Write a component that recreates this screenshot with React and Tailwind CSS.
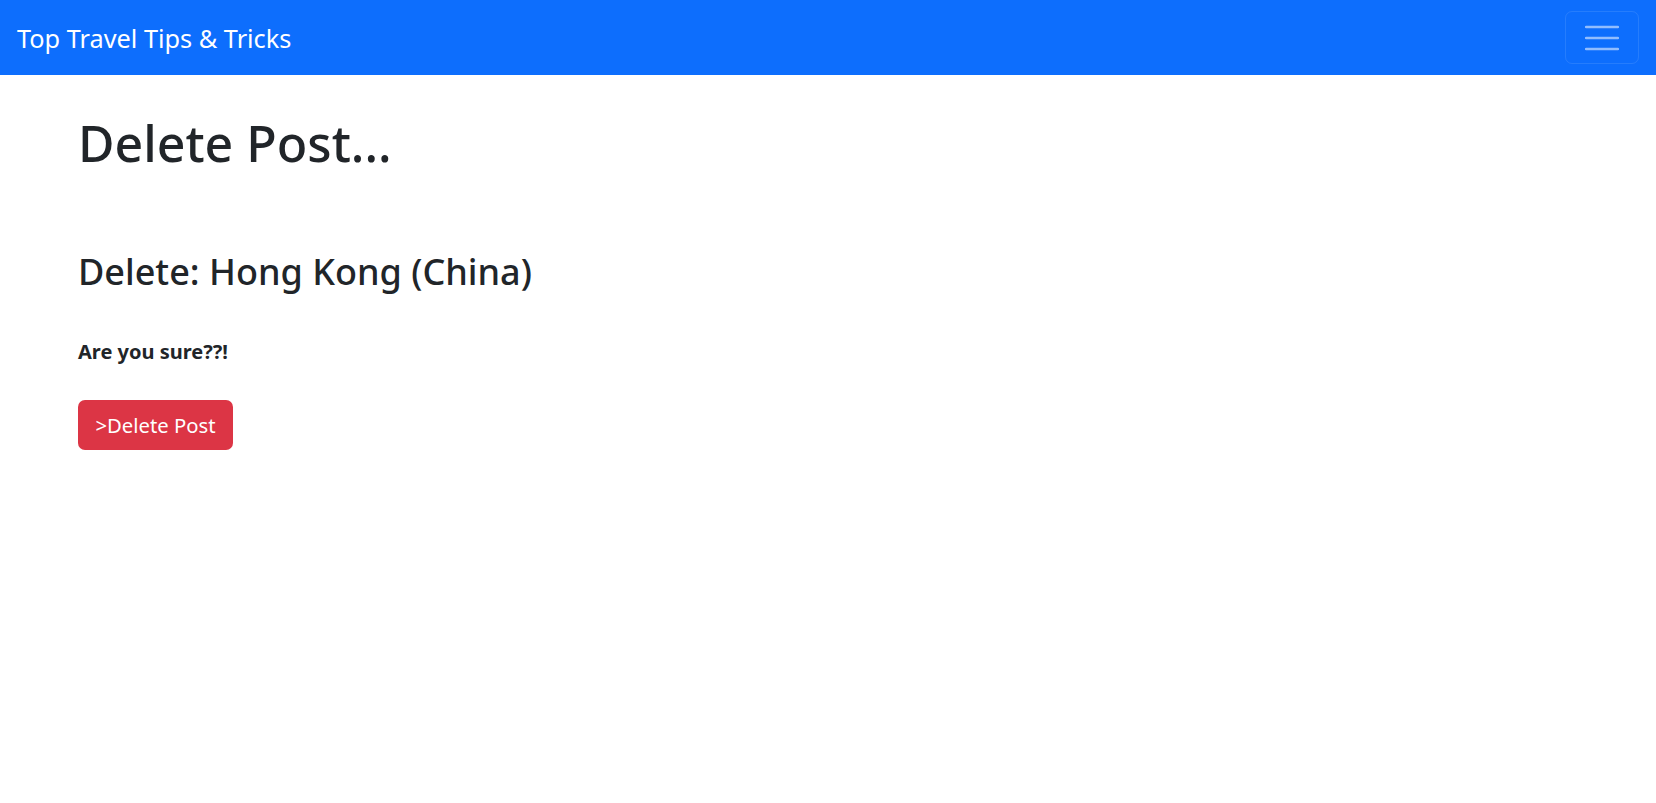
export default function App() {
  return (
    <div className="min-h-[803px] bg-white" style={{ fontFamily: '"Noto Sans", "Open Sans", sans-serif' }}>
      <nav className="h-[75px] bg-[#0d6efd] flex items-center justify-between pl-[17px] pr-[17px]">
        <a className="text-white text-[25.3px] leading-[1.5] mt-[2px]">Top Travel Tips &amp; Tricks</a>
        <button className="w-[74px] h-[53px] border border-white/10 rounded-[7px] flex items-center justify-center">
          <svg width="34" height="26" viewBox="0 0 34 26">
            <path d="M1 2h32M1 13h32M1 24h32" stroke="rgba(255,255,255,0.55)" strokeWidth="2.5" strokeLinecap="round" />
          </svg>
        </button>
      </nav>
      <main className="pl-[78px] text-[#212529]">
        <h1 className="text-[50px] leading-[1.2] font-medium mt-[38px]">Delete Post...</h1>
        <h3 className="text-[36px] leading-[1.2] font-medium mt-[77px]">Delete: Hong Kong (China)</h3>
        <p className="text-[20px] leading-[1.5] font-bold mt-[44px]">Are you sure??!</p>
        <button className="mt-[33px] h-[50px] w-[155px] rounded-[7px] bg-[#dc3545] text-white text-[20.3px] leading-[1.5] flex items-center justify-center">
          &gt;Delete Post
        </button>
      </main>
    </div>
  );
}
